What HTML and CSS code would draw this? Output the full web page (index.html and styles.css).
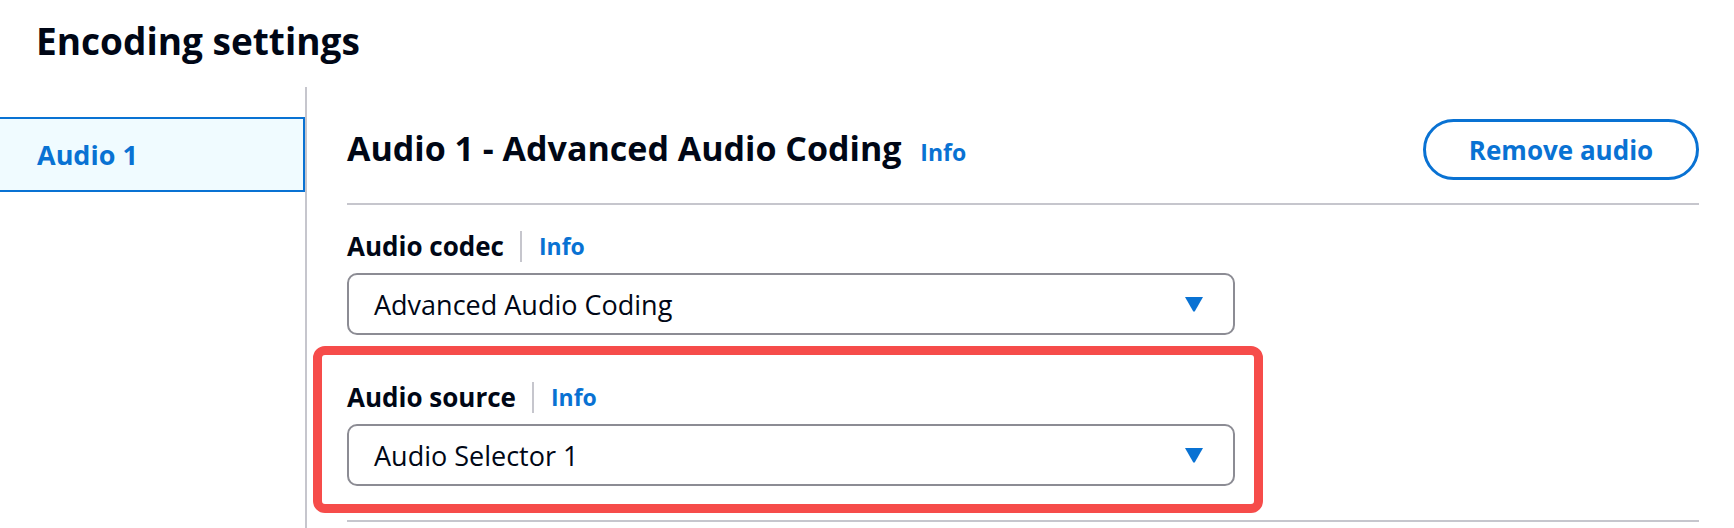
FILE: index.html
```html
<!DOCTYPE html>
<html lang="en">
<head>
<meta charset="utf-8">
<title>Encoding settings</title>
<link rel="stylesheet" href="styles.css">
</head>
<body>
<div class="page">
  <h2 class="title">Encoding settings</h2>
  <div class="layout">
    <nav class="sidebar">
      <div class="nav-item active">Audio 1</div>
    </nav>
    <main class="content">
      <div class="section-head">
        <h3 class="section-title">Audio 1 - Advanced Audio Coding <a class="info">Info</a></h3>
        <button class="btn">Remove audio</button>
      </div>
      <div class="fields">
        <div class="field">
          <div class="label-row"><span class="label">Audio codec</span><span class="divider"></span><a class="info">Info</a></div>
          <div class="select">
            <span class="select-value">Advanced Audio Coding</span>
            <svg class="caret" viewBox="0 0 20 16" width="20" height="16"><path d="M1 1 H19 L11 15 Q10 16.5 9 15 Z" fill="#0972d3"/></svg>
          </div>
        </div>
        <div class="field highlighted">
          <div class="label-row"><span class="label">Audio source</span><span class="divider"></span><a class="info">Info</a></div>
          <div class="select">
            <span class="select-value">Audio Selector 1</span>
            <svg class="caret" viewBox="0 0 20 16" width="20" height="16"><path d="M1 1 H19 L11 15 Q10 16.5 9 15 Z" fill="#0972d3"/></svg>
          </div>
        </div>
      </div>
      <div class="rule"></div>
    </main>
  </div>
</div>
</body>
</html>
```

FILE: styles.css
```css
* { box-sizing: border-box; }
html, body { margin: 0; padding: 0; background: #ffffff; }
body {
  font-family: "Open Sans", "Noto Sans", sans-serif;
  color: #000716;
  width: 1734px;
  height: 528px;
  overflow: hidden;
}
.page { padding-top: 19px; }
.title {
  margin: 0 0 24px 36px;
  font-size: 37px;
  line-height: 44px;
  font-weight: 700;
}
.layout {
  display: flex;
  padding-right: 35px;
}
.sidebar {
  width: 307px;
  flex: none;
  border-right: 2px solid #c6c6cd;
  padding-top: 30px;
  min-height: 460px;
}
.nav-item {
  height: 75px;
  display: flex;
  align-items: center;
  padding-left: 37px;
  font-size: 27px;
  font-weight: 700;
  color: #0972d3;
}
.nav-item.active {
  background: #f0fbff;
  border: 2px solid #0972d3;
  border-left: 0;
}
.content {
  flex: 1;
  padding-left: 40px;
  padding-top: 32px;
}
.section-head {
  display: flex;
  align-items: center;
  justify-content: space-between;
  padding-bottom: 23px;
  border-bottom: 2px solid #c6c6cd;
}
.section-title {
  margin: 0;
  font-size: 34px;
  line-height: 44px;
  font-weight: 700;
}
.section-title .info { margin-left: 10px; }
.info {
  font-size: 23px;
  font-weight: 700;
  color: #0972d3;
}
.btn {
  height: 61px;
  width: 276px;
  border: 3px solid #0972d3;
  border-radius: 32px;
  background: #ffffff;
  color: #0972d3;
  font-family: inherit;
  font-size: 26px;
  font-weight: 700;
}
.fields {
  width: 888px;
  padding-top: 24px;
  display: flex;
  flex-direction: column;
  gap: 45px;
}
.field { position: relative; }
.label-row {
  display: flex;
  align-items: center;
  height: 34px;
  margin-bottom: 10px;
}
.label {
  font-size: 26px;
  font-weight: 700;
}
.divider {
  width: 2px;
  height: 31px;
  background: #c6c6cd;
  margin: 0 17px 0 16px;
}
.select {
  height: 62px;
  border: 2px solid #8c8c94;
  border-radius: 10px;
  display: flex;
  align-items: center;
  justify-content: space-between;
  padding: 0 29px 0 25px;
}
.select-value { font-size: 27px; }
.caret { display: block; }
.highlighted::after {
  content: "";
  position: absolute;
  left: -34px;
  right: -28px;
  top: -34px;
  bottom: -27px;
  border: 9px solid #f64c4a;
  border-radius: 12px;
  pointer-events: none;
}
.rule {
  margin-top: 34px;
  height: 2px;
  background: #c6c6cd;
}
```
